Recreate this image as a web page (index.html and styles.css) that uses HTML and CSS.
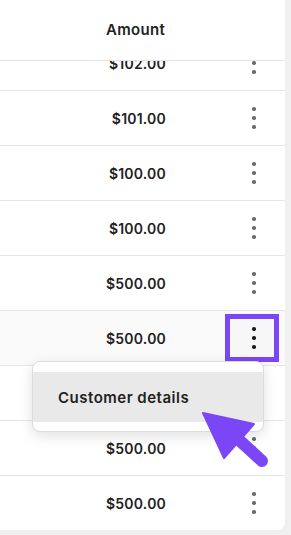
FILE: index.html
```html
<!DOCTYPE html>
<html>
<head>
<meta charset="utf-8">
<link rel="stylesheet" href="styles.css">
</head>
<body>
<div class="card">
  <div class="head">
    <div class="amount">Amount</div>
    <div class="act"></div>
  </div>
  <div class="scroller">
    <div class="rows">
      <div class="row"><div class="amount">$102.00</div><div class="act"><span class="kebab"><i></i><i></i><i></i></span></div></div>
      <div class="row"><div class="amount">$101.00</div><div class="act"><span class="kebab"><i></i><i></i><i></i></span></div></div>
      <div class="row"><div class="amount">$100.00</div><div class="act"><span class="kebab"><i></i><i></i><i></i></span></div></div>
      <div class="row"><div class="amount">$100.00</div><div class="act"><span class="kebab"><i></i><i></i><i></i></span></div></div>
      <div class="row"><div class="amount">$500.00</div><div class="act"><span class="kebab"><i></i><i></i><i></i></span></div></div>
      <div class="row active"><div class="amount">$500.00</div><div class="act"><span class="kebab focus"><i></i><i></i><i></i></span></div></div>
      <div class="row"><div class="amount">$500.00</div><div class="act"><span class="kebab"><i></i><i></i><i></i></span></div></div>
      <div class="row"><div class="amount">$500.00</div><div class="act"><span class="kebab"><i></i><i></i><i></i></span></div></div>
      <div class="row last"><div class="amount">$500.00</div><div class="act"><span class="kebab"><i></i><i></i><i></i></span></div></div>
    </div>
  </div>
</div>
<div class="menu">
  <div class="item">Customer details</div>
</div>
<svg class="pointer" width="291" height="535" viewBox="0 0 291 535">
  <polygon points="203,413 254,424 224,458" fill="#7a46f6" stroke="#7a46f6" stroke-width="2" stroke-linejoin="round"/>
  <line x1="226" y1="428" x2="262" y2="461" stroke="#7a46f6" stroke-width="12" stroke-linecap="round"/>
</svg>
</body>
</html>
```

FILE: styles.css
```css
html, body {
  margin: 0;
  padding: 0;
}
body {
  width: 291px;
  height: 535px;
  background: #f0f0f0;
  font-family: "Inter", "Open Sans", sans-serif;
  color: #222;
  position: relative;
  overflow: hidden;
}
.card {
  width: 285px;
  height: 530px;
  background: #fff;
  border-bottom-right-radius: 8px;
  overflow: hidden;
  display: flex;
  flex-direction: column;
}
.head {
  height: 60px;
  border-bottom: 1px solid #e6e6e6;
  display: flex;
  align-items: center;
  font-size: 15px;
  font-weight: 600;
  flex-shrink: 0;
}
.amount {
  width: 166px;
  text-align: right;
  flex-shrink: 0;
  letter-spacing: 0.2px;
}
.head .amount {
  width: 165px;
  letter-spacing: 0.3px;
  padding-bottom: 2px;
}
.act {
  width: 56px;
  margin-left: 58px;
  display: flex;
  justify-content: center;
  flex-shrink: 0;
}
.scroller {
  flex: 1;
  overflow: hidden;
}
.rows {
  margin-top: -25px;
}
.row {
  height: 54px;
  border-bottom: 1px solid #e6e6e6;
  display: flex;
  align-items: center;
  font-size: 14px;
  font-weight: 600;
}
.row.last {
  border-bottom: none;
}
.row.active {
  background: #fafafa;
}
.kebab {
  width: 44px;
  height: 38px;
  box-sizing: border-box;
  display: flex;
  flex-direction: column;
  align-items: center;
  justify-content: center;
  gap: 5.5px;
  padding-left: 4px;
}
.kebab i {
  display: block;
  width: 3.5px;
  height: 3.5px;
  border-radius: 50%;
  background: #6a6a6a;
}
.kebab.focus {
  outline: 5px solid #7a46f6;
  background: #f7f7f7;
}
.kebab.focus i {
  background: #1a1a1a;
}
.menu {
  position: absolute;
  left: 32px;
  top: 361px;
  width: 232px;
  height: 71px;
  box-sizing: border-box;
  background: #fff;
  border: 1px solid #dcdcdc;
  border-radius: 8px;
  box-shadow: 0 4px 14px rgba(0, 0, 0, 0.12);
  padding: 10px 0;
  overflow: hidden;
}
.item {
  height: 50px;
  background: #e9e9e9;
  display: flex;
  align-items: center;
  padding-left: 25px;
  font-size: 15px;
  font-weight: 600;
  letter-spacing: 0.5px;
}
.pointer {
  position: absolute;
  left: 0;
  top: 0;
}
```
